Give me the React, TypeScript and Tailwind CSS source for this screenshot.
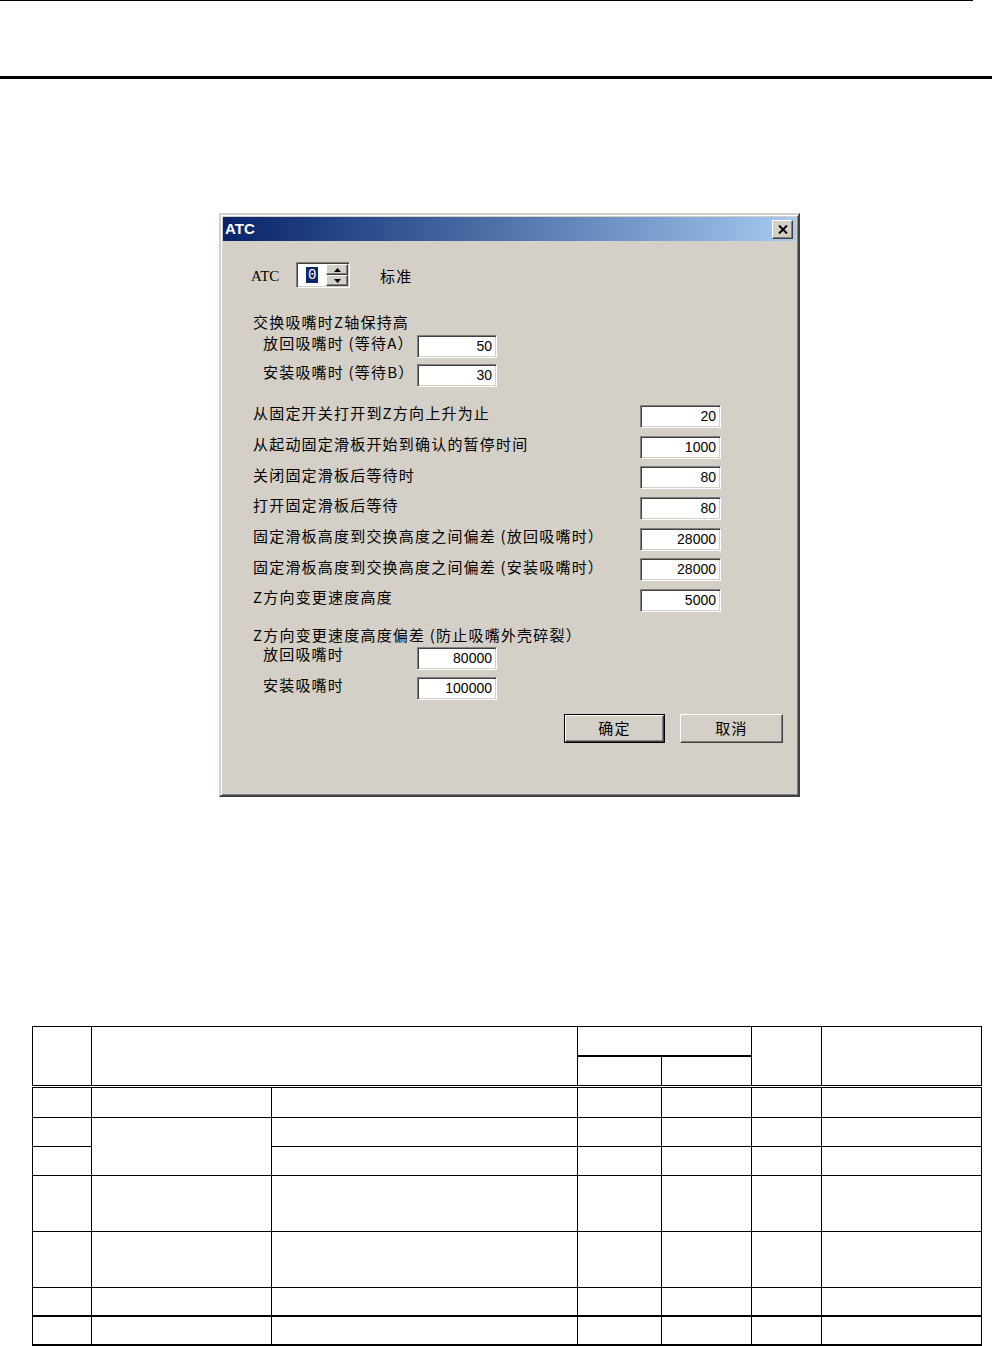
import React from "react";

const cjk = "font-['Noto_Sans_CJK_SC',sans-serif] text-[15px] tracking-[1.2px] text-black";

const sunken =
  "border border-t-[#808080] border-l-[#808080] border-r-white border-b-white shadow-[inset_1px_1px_0_#404040,inset_-1px_-1px_0_#D4D0C8]";
const raised =
  "border border-t-white border-l-white border-r-[#404040] border-b-[#404040] shadow-[inset_-1px_-1px_0_#808080,inset_1px_1px_0_#D4D0C8]";

function Field({ value, wide }: { value: string; wide?: boolean }) {
  return (
    <div
      className={`${sunken} ${wide ? "w-[81px]" : "w-[80px]"} h-[23px] bg-white flex items-center justify-end pr-[4px] font-['Liberation_Sans',sans-serif] text-[14px] text-black`}
    >
      {value}
    </div>
  );
}

function Triangle({ up }: { up?: boolean }) {
  return (
    <svg width="7" height="4" viewBox="0 0 7 4">
      {up ? <path d="M3.5 0 L7 4 L0 4 Z" fill="#000" /> : <path d="M0 0 L7 0 L3.5 4 Z" fill="#000" />}
    </svg>
  );
}

const rightRows: [string, string][] = [
  ["从固定开关打开到Z方向上升为止", "20"],
  ["从起动固定滑板开始到确认的暂停时间", "1000"],
  ["关闭固定滑板后等待时", "80"],
  ["打开固定滑板后等待", "80"],
  ["固定滑板高度到交换高度之间偏差 (放回吸嘴时）", "28000"],
  ["固定滑板高度到交换高度之间偏差 (安装吸嘴时）", "28000"],
  ["Z方向变更速度高度", "5000"],
];

const AtcDialog: React.FC = () => {
  return (
    <div className="ml-[219px] mt-[134px] w-[581px] h-[584px] bg-[#D4D0C8] border-2 border-t-[#D4D0C8] border-l-[#D4D0C8] border-r-[#404040] border-b-[#404040] shadow-[inset_1px_1px_0_#fff,inset_-1px_-1px_0_#808080] p-[2px] flex flex-col">
      {/* title bar */}
      <div className="h-[24px] bg-linear-to-r from-[#0A246A] to-[#A6CAF0] flex items-center justify-between pl-[2px] pr-[3px]">
        <span className="font-['Liberation_Sans',sans-serif] font-bold text-[15px] text-white">ATC</span>
        <div className={`${raised} w-[21px] h-[19px] bg-[#D4D0C8] flex items-center justify-center`}>
          <svg width="10" height="9" viewBox="0 0 10 9">
            <path d="M1 0.5 L9 8.5 M9 0.5 L1 8.5" stroke="#000" strokeWidth="2" />
          </svg>
        </div>
      </div>

      <div className="flex flex-col">
        {/* ATC spinner */}
        <div className="flex items-center h-[26px] mt-[21px] pl-[28px]">
          <span className="w-[45px] font-['Liberation_Serif',serif] text-[15px] text-black pt-[3px]">ATC</span>
          <div className={`${sunken} w-[54px] h-[26px] bg-white flex items-center`}>
            <div className="flex-1 flex items-center pl-[9px]">
              <span className="bg-[#0A246A] text-white font-['Liberation_Mono',monospace] text-[14px] leading-[16px] px-[2px]">0</span>
            </div>
            <div className="flex flex-col w-[22px] mr-[1px]">
              <div className={`${raised} h-[11px] bg-[#D4D0C8] flex items-center justify-center`}>
                <Triangle up />
              </div>
              <div className={`${raised} h-[11px] bg-[#D4D0C8] flex items-center justify-center`}>
                <Triangle />
              </div>
            </div>
          </div>
          <span className={`${cjk} ml-[30px] pt-[3px]`}>标准</span>
        </div>

        {/* nozzle exchange height */}
        <div className={`${cjk} h-[20px] leading-[20px] mt-[24px] pl-[30px]`}>交换吸嘴时Z轴保持高</div>
        <div className="flex items-center h-[23px] mt-[3px] pl-[30px]">
          <span className={`${cjk} w-[164px] pl-[10px] -mt-[6px]`}>放回吸嘴时 (等待A）</span>
          <Field value="50" />
        </div>
        <div className="flex items-center h-[23px] mt-[6px] pl-[30px]">
          <span className={`${cjk} w-[164px] pl-[10px] -mt-[6px]`}>安装吸嘴时 (等待B）</span>
          <Field value="30" />
        </div>

        {/* timing rows */}
        <div className="flex flex-col gap-[7.7px] mt-[18px]">
          {rightRows.map(([label, value]) => (
            <div key={label + value} className="flex items-center h-[23px] pl-[30px]">
              <span className={`${cjk} w-[387px] -mt-[6px] whitespace-nowrap`}>{label}</span>
              <Field value={value} wide />
            </div>
          ))}
        </div>

        {/* z direction change */}
        <div className={`${cjk} h-[20px] leading-[20px] mt-[13px] pl-[30px] whitespace-nowrap`}>
          Z方向变更速度高度偏差 (防止吸嘴外壳碎裂）
        </div>
        <div className="flex items-center h-[22px] mt-[2px] pl-[30px]">
          <span className={`${cjk} w-[164px] pl-[10px] -mt-[8px]`}>放回吸嘴时</span>
          <Field value="80000" />
        </div>
        <div className="flex items-center h-[22px] mt-[8px] pl-[30px]">
          <span className={`${cjk} w-[164px] pl-[10px] -mt-[6px]`}>安装吸嘴时</span>
          <Field value="100000" />
        </div>

        {/* buttons */}
        <div className="flex justify-end gap-[15px] mt-[15px] pr-[13px]">
          <div className="border border-black w-[101px] h-[29px]">
            <div className={`${raised} w-full h-full bg-[#D4D0C8] flex items-center justify-center ${cjk}`}>确定</div>
          </div>
          <div className={`${raised} w-[103px] h-[29px] bg-[#D4D0C8] flex items-center justify-center ${cjk}`}>取消</div>
        </div>
      </div>
    </div>
  );
};

const cell = "border border-black p-0";

const SpecTable: React.FC = () => {
  return (
    <table className="ml-[32px] mt-[229px] w-[949px] table-fixed border-collapse">
      <colgroup>
        <col className="w-[59px]" />
        <col className="w-[180px]" />
        <col className="w-[306px]" />
        <col className="w-[84px]" />
        <col className="w-[90px]" />
        <col className="w-[70px]" />
        <col className="w-[160px]" />
      </colgroup>
      <tbody>
        <tr>
          <td rowSpan={2} className={`${cell} border-b-[3px] border-double`} />
          <td rowSpan={2} colSpan={2} className={`${cell} border-b-[3px] border-double`} />
          <td colSpan={2} className={`${cell} border-b-2 h-[30px]`} />
          <td rowSpan={2} className={`${cell} border-b-[3px] border-double`} />
          <td rowSpan={2} className={`${cell} border-b-[3px] border-double`} />
        </tr>
        <tr>
          <td className={`${cell} border-b-[3px] border-double h-[30px]`} />
          <td className={`${cell} border-b-[3px] border-double`} />
        </tr>
        <tr>
          <td className={`${cell} h-[31px]`} />
          <td className={cell} />
          <td className={cell} />
          <td className={cell} />
          <td className={cell} />
          <td className={cell} />
          <td className={cell} />
        </tr>
        <tr>
          <td className={`${cell} h-[29px]`} />
          <td rowSpan={2} className={cell} />
          <td className={cell} />
          <td className={cell} />
          <td className={cell} />
          <td className={cell} />
          <td className={cell} />
        </tr>
        <tr>
          <td className={`${cell} h-[29px]`} />
          <td className={cell} />
          <td className={cell} />
          <td className={cell} />
          <td className={cell} />
          <td className={cell} />
        </tr>
        {[56, 56, 29].map((h, i) => (
          <tr key={i}>
            <td className={`${cell} ${h === 56 ? "h-[56px]" : "h-[29px]"}`} />
            <td className={cell} />
            <td className={cell} />
            <td className={cell} />
            <td className={cell} />
            <td className={cell} />
            <td className={cell} />
          </tr>
        ))}
        <tr>
          <td className={`${cell} border-t-2 border-b-2 h-[29px]`} />
          <td className={`${cell} border-t-2 border-b-2`} />
          <td className={`${cell} border-t-2 border-b-2`} />
          <td className={`${cell} border-t-2 border-b-2`} />
          <td className={`${cell} border-t-2 border-b-2`} />
          <td className={`${cell} border-t-2 border-b-2`} />
          <td className={`${cell} border-t-2 border-b-2`} />
        </tr>
      </tbody>
    </table>
  );
};

const App: React.FC = () => {
  return (
    <div className="w-[994px] h-[1346px] bg-white overflow-hidden flex flex-col">
      <div className="w-[973px] h-px bg-black" />
      <div className="w-[992px] h-[3px] bg-black mt-[75px]" />
      <AtcDialog />
      <SpecTable />
    </div>
  );
};

export default App;
